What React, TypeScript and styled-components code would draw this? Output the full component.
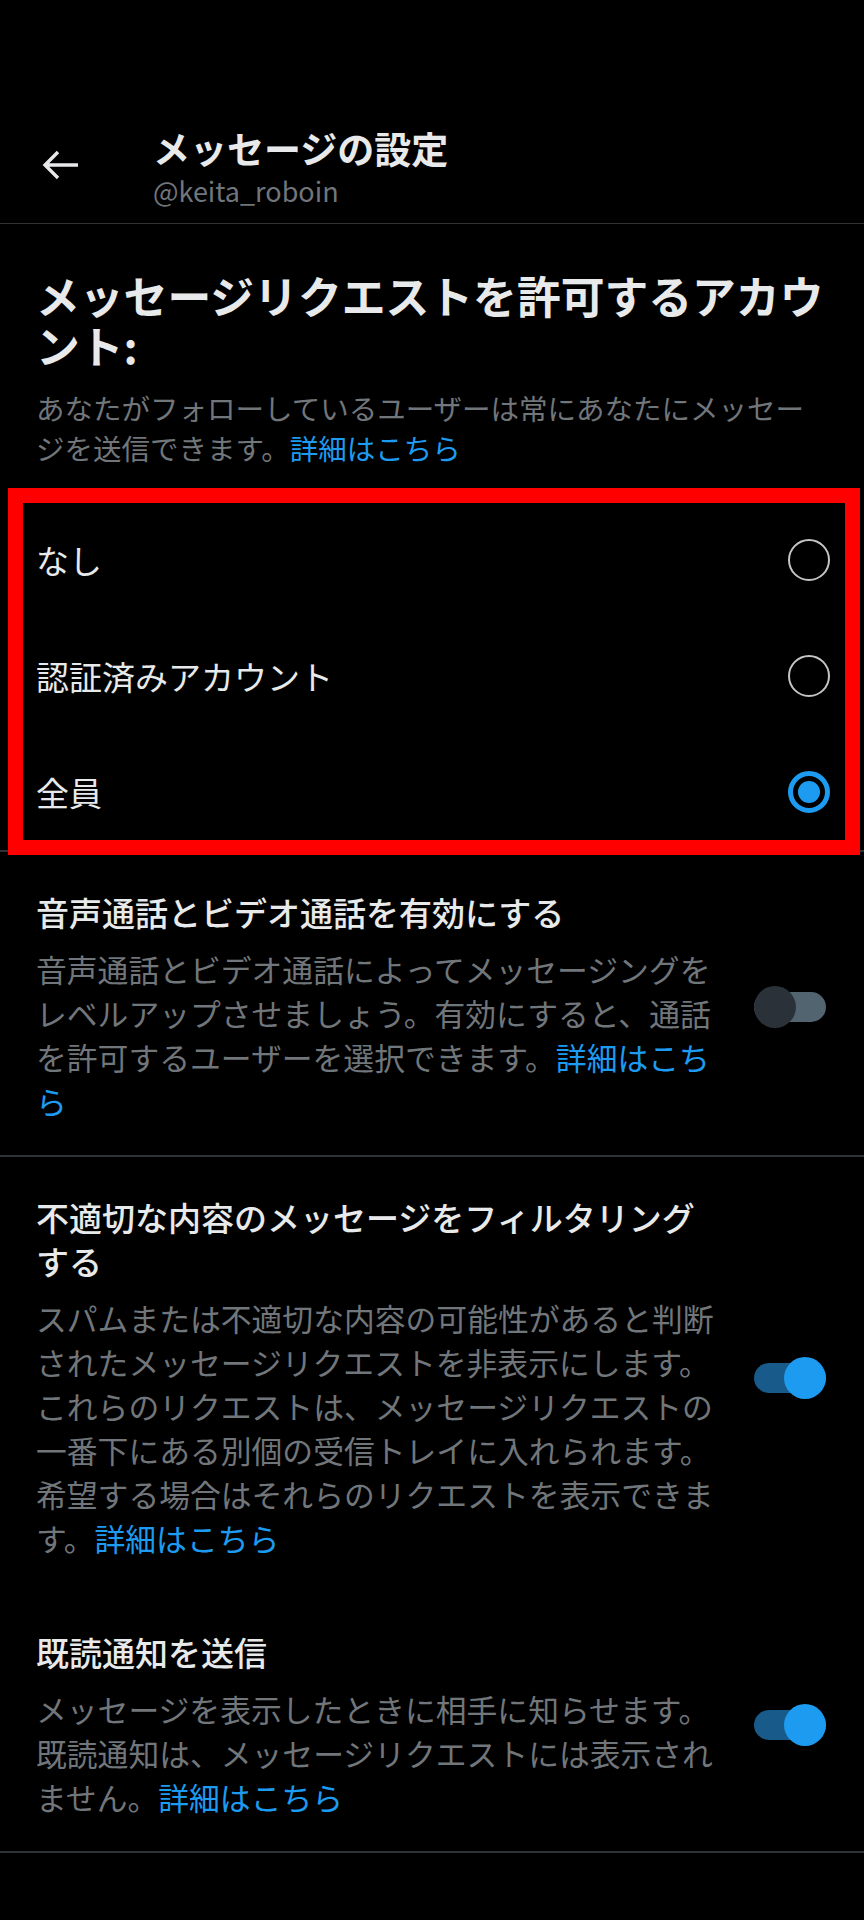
import React from "react";
import styled, { createGlobalStyle } from "styled-components";

const GlobalStyle = createGlobalStyle`
  body {
    margin: 0;
    background: #000000;
    font-family: "Noto Sans CJK JP", "Noto Sans", Roboto, sans-serif;
    color: #e7e9ea;
  }
`;

const options = ["なし", "認証済みアカウント", "全員"];
const selected = 2;

const toggles = [
  {
    title: "音声通話とビデオ通話を有効にする",
    text: "音声通話とビデオ通話によってメッセージングをレベルアップさせましょう。有効にすると、通話を許可するユーザーを選択できます。",
    on: false,
    divider: true,
  },
  {
    title: "不適切な内容のメッセージをフィルタリングする",
    text: "スパムまたは不適切な内容の可能性があると判断されたメッセージリクエストを非表示にします。これらのリクエストは、メッセージリクエストの一番下にある別個の受信トレイに入れられます。希望する場合はそれらのリクエストを表示できます。",
    on: true,
    divider: false,
  },
  {
    title: "既読通知を送信",
    text: "メッセージを表示したときに相手に知らせます。既読通知は、メッセージリクエストには表示されません。",
    on: true,
    divider: true,
  },
];

const BackArrow = () => (
  <svg width="38" height="32" viewBox="0 0 38 32" fill="none">
    <path
      d="M37 16H4M17 3L4 16l13 13"
      stroke="#e7e9ea"
      strokeWidth="3.4"
      strokeLinejoin="miter"
    />
  </svg>
);

const App = () => {
  return (
    <Page>
      <GlobalStyle />
      <Header>
        <BackButton>
          <BackArrow />
        </BackButton>
        <HeaderText>
          <HeaderTitle>メッセージの設定</HeaderTitle>
          <Handle>@keita_roboin</Handle>
        </HeaderText>
      </Header>

      <Intro>
        <Heading>メッセージリクエストを許可するアカウント:</Heading>
        <Description>
          あなたがフォローしているユーザーは常にあなたにメッセージを送信できます。
          <Link>詳細はこちら</Link>
        </Description>
      </Intro>

      <OptionGroup>
        {options.map((label, i) => (
          <OptionRow key={label}>
            <OptionLabel>{label}</OptionLabel>
            <Radio $checked={i === selected}>{i === selected && <RadioDot />}</Radio>
          </OptionRow>
        ))}
      </OptionGroup>

      {toggles.map((t) => (
        <ToggleSection key={t.title} $divider={t.divider}>
          <TextColumn>
            <SectionTitle>{t.title}</SectionTitle>
            <SectionText>
              {t.text}
              <Link>詳細はこちら</Link>
            </SectionText>
          </TextColumn>
          <Track $on={t.on}>
            <Thumb $on={t.on} />
          </Track>
        </ToggleSection>
      ))}
    </Page>
  );
};

export default App;

const Page = styled("div")`
  width: 864px;
  min-height: 1920px;
  background: #000000;
`;

const Header = styled("div")`
  display: flex;
  align-items: flex-start;
  padding: 126px 0 15px 41px;
  border-bottom: 1px solid #2f3336;
`;

const BackButton = styled("div")`
  width: 38px;
  height: 32px;
  margin-top: 23px;
  margin-right: 74px;
`;

const HeaderText = styled("div")`
  display: flex;
  flex-direction: column;
`;

const HeaderTitle = styled("div")`
  font-size: 37px;
  line-height: 44px;
  font-weight: 700;
  color: #e7e9ea;
`;

const Handle = styled("div")`
  font-size: 27px;
  line-height: 34px;
  margin-top: 4px;
  color: #71767b;
`;

const Intro = styled("div")`
  padding: 46px 36px 0 36px;
`;

const Heading = styled("div")`
  font-size: 43.8px;
  line-height: 50px;
  font-weight: 700;
  color: #e7e9ea;
`;

const Description = styled("div")`
  margin-top: 18px;
  font-size: 28.5px;
  line-height: 40px;
  color: #71767b;
`;

const Link = styled("span")`
  color: #1d9bf0;
`;

const OptionGroup = styled("div")`
  position: relative;
  margin-top: 34px;
  border-bottom: 2px solid #2f3336;

  &::after {
    content: "";
    position: absolute;
    left: 8px;
    right: 4px;
    top: -14px;
    bottom: -5px;
    border: 15px solid #ff0000;
    pointer-events: none;
  }
`;

const OptionRow = styled("div")`
  display: flex;
  align-items: center;
  justify-content: space-between;
  height: 116px;
  padding: 0 34px 0 36px;
`;

const OptionLabel = styled("div")`
  font-size: 33px;
  line-height: 44px;
  color: #e7e9ea;
`;

const Radio = styled("div")<{ $checked: boolean }>`
  box-sizing: border-box;
  width: 42px;
  height: 42px;
  border-radius: 50%;
  border: ${(p) => (p.$checked ? "5px solid #1d9bf0" : "2.5px solid #c4c4c4")};
  display: flex;
  align-items: center;
  justify-content: center;
`;

const RadioDot = styled("div")`
  width: 22px;
  height: 22px;
  border-radius: 50%;
  background: #1d9bf0;
`;

const ToggleSection = styled("div")<{ $divider: boolean }>`
  display: flex;
  align-items: center;
  gap: 29px;
  padding: 38px 38px 32px 36px;
  border-bottom: ${(p) => (p.$divider ? "2px solid #2f3336" : "none")};
`;

const TextColumn = styled("div")`
  flex: 1;
  min-width: 0;
`;

const SectionTitle = styled("div")`
  font-size: 33px;
  line-height: 44px;
  font-weight: 500;
  color: #e7e9ea;
`;

const SectionText = styled("div")`
  margin-top: 13px;
  font-size: 30.8px;
  line-height: 44px;
  color: #71767b;
`;

const Track = styled("div")<{ $on: boolean }>`
  position: relative;
  flex-shrink: 0;
  width: 72px;
  height: 30px;
  border-radius: 15px;
  background: ${(p) => (p.$on ? "#185a8a" : "#536471")};
`;

const Thumb = styled("div")<{ $on: boolean }>`
  position: absolute;
  top: -6px;
  left: ${(p) => (p.$on ? "30px" : "0")};
  width: 42px;
  height: 42px;
  border-radius: 50%;
  background: ${(p) => (p.$on ? "#1d9bf0" : "#2b3138")};
`;
